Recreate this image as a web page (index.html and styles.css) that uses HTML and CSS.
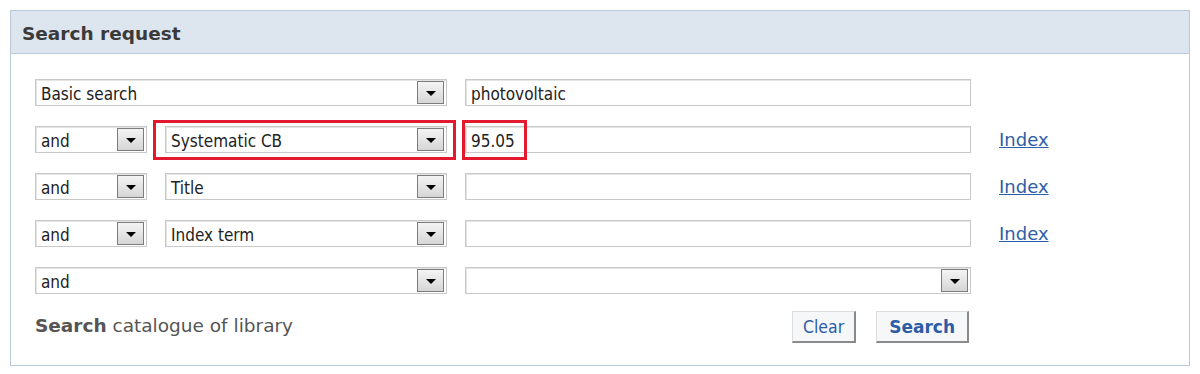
FILE: index.html
```html
<!DOCTYPE html>
<html lang="en">
<head>
    <meta charset="UTF-8">
    <title>Search request</title>
    <link rel="stylesheet" href="styles.css">
</head>
<body>
    <div class="panel">
        <div class="panel-head">Search request</div>
        <div class="panel-body">
            <div class="rows">
                <div class="select wide"><span>Basic search</span><i class="arrow"></i></div>
                <div class="field">photovoltaic</div>
                <div></div>

                <div class="select"><span>and</span><i class="arrow"></i></div>
                <div class="select marked"><span>Systematic CB</span><i class="arrow"></i></div>
                <div class="field"><span class="marked-text">95.05</span></div>
                <a href="#" class="index">Index</a>

                <div class="select"><span>and</span><i class="arrow"></i></div>
                <div class="select"><span>Title</span><i class="arrow"></i></div>
                <div class="field"></div>
                <a href="#" class="index">Index</a>

                <div class="select"><span>and</span><i class="arrow"></i></div>
                <div class="select"><span>Index term</span><i class="arrow"></i></div>
                <div class="field"></div>
                <a href="#" class="index">Index</a>

                <div class="select wide"><span>and</span><i class="arrow"></i></div>
                <div class="select"><span></span><i class="arrow"></i></div>
                <div></div>
            </div>
            <div class="footer">
                <div class="note"><b>Search</b> catalogue of library</div>
                <div class="actions">
                    <button class="btn">Clear</button>
                    <button class="btn bold">Search</button>
                </div>
            </div>
        </div>
    </div>
</body>
</html>
```

FILE: styles.css
```css
body {
    margin: 0;
    padding: 10px;
    background: #ffffff;
    font-family: "DejaVu Sans Condensed", "DejaVu Sans", sans-serif;
    color: #222222;
}
.panel {
    width: 1178px;
    height: 354px;
    border: 1px solid #b9c9d9;
    box-sizing: content-box;
}
.panel-head {
    height: 43px;
    background: #dde6ef;
    border-bottom: 1px solid #b9c9d9;
    padding-left: 11px;
    padding-top: 2px;
    box-sizing: border-box;
    display: flex;
    align-items: center;
    font-family: "DejaVu Sans", sans-serif;
    font-weight: bold;
    font-size: 18.5px;
    color: #3a3a3a;
}
.panel-body {
    padding: 25px 0 0 24px;
}
.rows {
    display: grid;
    grid-template-columns: 112px 282px 506px 80px;
    column-gap: 18px;
    row-gap: 20px;
    grid-auto-rows: 27px;
}
.rows > .wide {
    grid-column: span 2;
}
.select,
.field {
    border: 1px solid #c9c9c9;
    box-shadow: inset 1px 1px 0 #e4e4e4;
    display: flex;
    align-items: center;
    padding-left: 5px;
    padding-top: 2px;
    font-size: 17px;
    position: relative;
    background: #ffffff;
}
.select span {
    flex: 1;
}
.arrow {
    width: 25px;
    height: 21px;
    margin-right: 2px;
    margin-top: -3px;
    border: 1px solid #7c7c7c;
    background: linear-gradient(#f4f4f4, #d6d6d6);
    display: flex;
    align-items: center;
    justify-content: center;
}
.arrow::after {
    content: "";
    border-left: 5px solid transparent;
    border-right: 5px solid transparent;
    border-top: 5px solid #000000;
    margin-top: 3px;
}
.marked::before {
    content: "";
    position: absolute;
    left: -13px;
    right: -10px;
    top: -7px;
    bottom: -8px;
    border: 3px solid #e3192d;
}
.marked-text {
    position: relative;
}
.marked-text::before {
    content: "";
    position: absolute;
    left: -9px;
    right: -12px;
    top: -11px;
    bottom: -9px;
    border: 3px solid #e3192d;
}
.index {
    align-self: center;
    margin-left: 10px;
    color: #2d5ea8;
    font-family: "DejaVu Sans", sans-serif;
    font-size: 18px;
}
.footer {
    display: flex;
    justify-content: space-between;
    align-items: center;
    width: 934px;
    margin-top: 17px;
}
.note {
    font-family: "DejaVu Sans", sans-serif;
    font-size: 18.5px;
    color: #555555;
    margin-top: -4px;
}
.actions {
    display: flex;
    gap: 20px;
}
.btn {
    height: 32px;
    padding: 0 10px;
    background: #f6f7f9;
    border: 1px solid #dcdcdc;
    border-right: 2px solid #8a8a8a;
    border-bottom: 2px solid #8a8a8a;
    font-family: "DejaVu Sans Condensed", "DejaVu Sans", sans-serif;
    font-size: 17.5px;
    color: #2c5ca6;
}
.btn.bold {
    font-family: "DejaVu Sans", sans-serif;
    font-weight: bold;
    font-size: 17px;
    padding: 0 12px;
}
```
